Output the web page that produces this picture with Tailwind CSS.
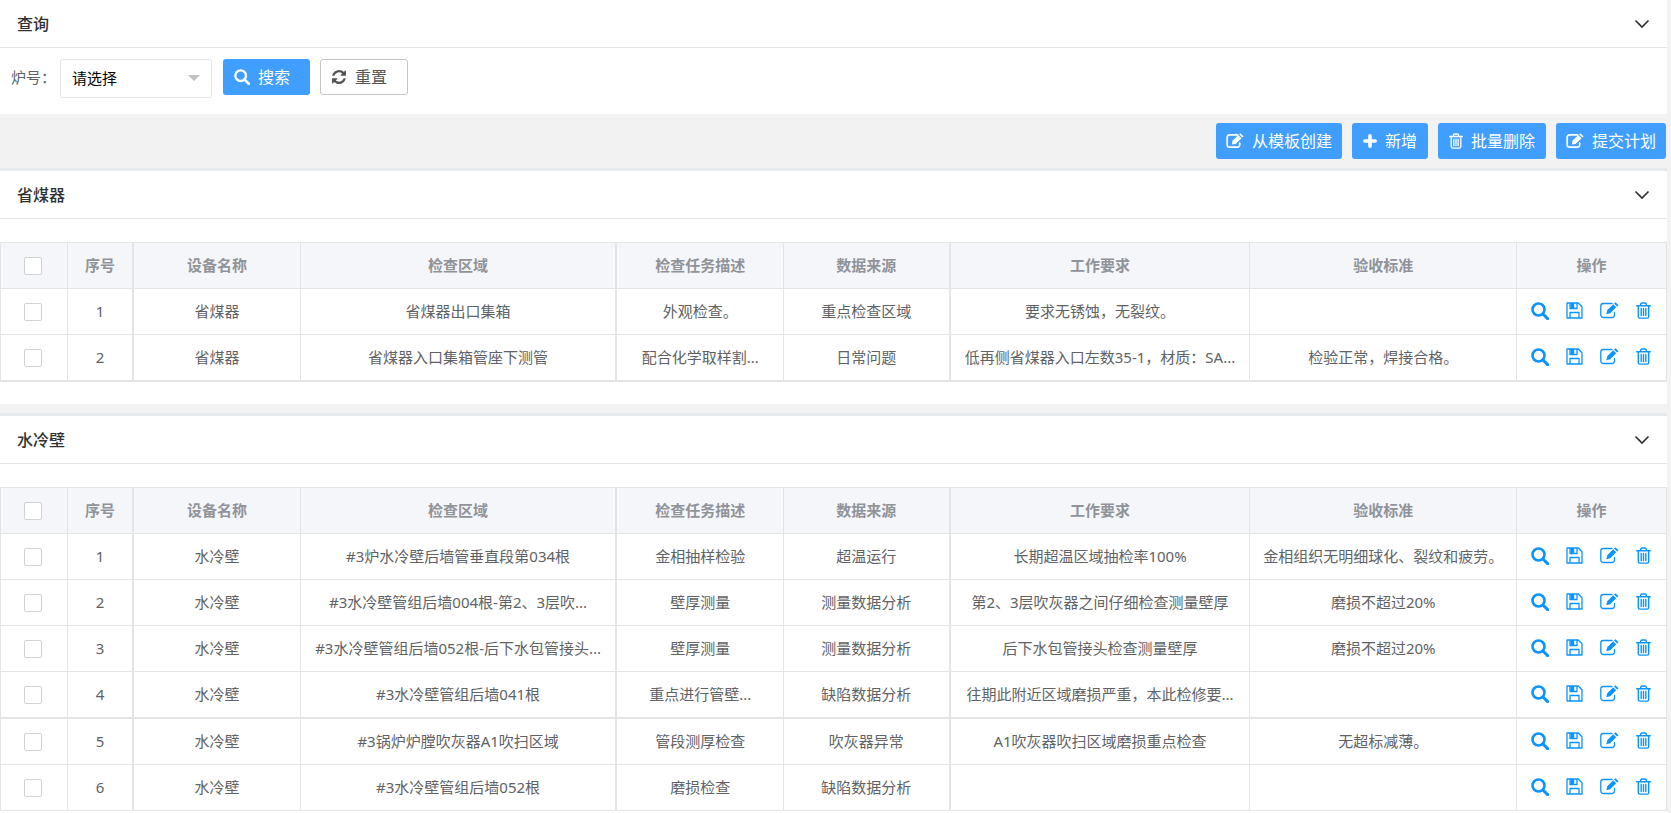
<!DOCTYPE html>
<html lang="zh-CN">
<head>
  <meta charset="UTF-8">
  <meta name="viewport" content="width=device-width, initial-scale=1.0">
  <title>检修计划</title>
  <script src="https://cdn.jsdelivr.net/npm/@tailwindcss/browser@4"></script>
</head>
<body class="bg-[#f2f2f2] min-h-screen flex flex-col pr-1 text-[15px] leading-5 text-[#606266] font-['Noto_Sans','Noto_Sans_CJK_SC',sans-serif]">

  <!-- Icons -->
  <svg class="hidden">
    <symbol id="i-search" viewBox="0 0 18 18">
      <circle cx="7.5" cy="7.5" r="6" fill="none" stroke="currentColor" stroke-width="2.6"/>
      <path d="M12 12l4.6 4.6" stroke="currentColor" stroke-width="3" stroke-linecap="round"/>
    </symbol>
    <symbol id="i-refresh" viewBox="0 0 1536 1536">
      <path fill="currentColor" d="M1511 928q0 5-1 7-64 268-268 434.500t-478 166.500q-146 0-282.500-55t-243.500-157l-129 129q-19 19-45 19t-45-19-19-45v-448q0-26 19-45t45-19h448q26 0 45 19t19 45-19 45l-137 137q71 66 161 102t187 36q134 0 250-65t186-179q11-17 53-117 8-23 30-23h192q13 0 22.500 9.500t9.500 22.500zm25-800v448q0 26-19 45t-45 19h-448q-26 0-45-19t-19-45 19-45l138-138q-148-137-349-137-134 0-250 65t-186 179q-11 17-53 117-8 23-30 23h-199q-13 0-22.500-9.500t-9.500-22.500v-7q65-268 270-434.500t480-166.500q146 0 284 55.500t245 156.500l130-129q19-19 45-19t45 19 19 45z"/>
    </symbol>
    <symbol id="i-edit" viewBox="0 0 19 17">
      <path d="M12 1.500H3.300A2.500 2.500 0 0 0 .8 4v9a2.500 2.500 0 0 0 2.500 2.500h8.700a2.500 2.500 0 0 0 2.500-2.500v-2.500" fill="none" stroke="currentColor" stroke-width="1.300" stroke-linecap="round"/>
      <path d="M6.300 12.300l.9-4 6-6 3 3-6 6zM14 1.500L15.500.2l3 3-1.400 1.400z" fill="currentColor"/>
    </symbol>
    <symbol id="i-edit-bold" viewBox="0 0 19 17">
      <path d="M12 1.900H3.700A2.500 2.500 0 0 0 1.200 4.400v8.200a2.500 2.500 0 0 0 2.500 2.500h8.300a2.500 2.500 0 0 0 2.500-2.500v-2" fill="none" stroke="currentColor" stroke-width="1.800" stroke-linecap="round"/>
      <path d="M6.300 12.300l.5-4 6.200-6.200 3.400 3.400-6.200 6.200zM13.900 1.300L15.200.2l3.400 3.400-1.300 1.200z" fill="currentColor"/>
    </symbol>
    <symbol id="i-plus" viewBox="0 0 14 14">
      <path d="M7 1.800v10.400M1.800 7h10.400" stroke="currentColor" stroke-width="3.600" stroke-linecap="round"/>
    </symbol>
    <symbol id="i-trash" viewBox="0 0 15 17">
      <path d="M.7 3.700h13.600M4.700 3.500V2.300a1.300 1.300 0 0 1 1.300-1.300h3a1.300 1.300 0 0 1 1.300 1.300v1.200M2.300 4v10.500a1.600 1.600 0 0 0 1.600 1.600h7.200a1.600 1.600 0 0 0 1.600-1.600V4M5.200 6.500v7M7.500 6.500v7M9.800 6.500v7" fill="none" stroke="currentColor" stroke-width="1.400" stroke-linecap="round"/>
    </symbol>
    <symbol id="i-save" viewBox="0 0 17 17">
      <path d="M1 1h11.300L16 4.700V16H1zM4 16v-5.500h9V16M4 1v5.500h7V1" fill="none" stroke="currentColor" stroke-width="1.300" stroke-linejoin="round"/>
      <path d="M4.500 1h3.700v5.500H4.500z" fill="currentColor"/>
    </symbol>
    <symbol id="i-down" viewBox="0 0 16 10">
      <path d="M1.500 1.500L8 8l6.500-6.500" fill="none" stroke="currentColor" stroke-width="1.700"/>
    </symbol>
  </svg>

  <!-- Query -->
  <section class="bg-white">
    <header class="flex items-center justify-between h-12 px-[17px] border-b border-[#e4e4e4] text-[#303133]">
      <h2 class="text-base leading-6 font-medium">查询</h2>
      <button type="button" aria-label="折叠"><svg class="w-4 h-[10px]"><use href="#i-down"/></svg></button>
    </header>
    <form class="flex items-start h-[66px] pt-[11px] pl-[11px]">
      <label for="furnace" class="w-[49px] leading-9 whitespace-nowrap">炉号：</label>
      <div class="relative w-[152px] mr-[11px]">
        <select id="furnace" class="appearance-none w-full h-[39px] pl-[11px] pb-[2px] border border-[#e4e4e4] rounded-[3px] bg-white text-black">
          <option>请选择</option>
        </select>
        <span class="absolute right-3 top-4 border-x-[6px] border-t-[6px] border-x-transparent border-t-[#c0c0c0] pointer-events-none"></span>
      </div>
      <button type="button" class="flex items-center h-9 w-[87px] pl-[11px] gap-2 mr-[10px] rounded-[3px] bg-[#409eff] text-white text-base">
        <svg class="w-4 h-4"><use href="#i-search"/></svg>搜索
      </button>
      <button type="button" class="flex items-center h-9 w-[88px] pl-[11px] gap-[9px] rounded-[3px] border border-[#c4c4c4] bg-white text-[#555] text-base">
        <svg class="w-[14px] h-[14px]"><use href="#i-refresh"/></svg>重置
      </button>
    </form>
  </section>

  <!-- Toolbar -->
  <div class="flex justify-end gap-[10px] py-[9px] pr-px text-base text-white">
    <button type="button" class="flex items-center h-9 px-[10px] gap-2 rounded-[3px] bg-[#409eff]">
      <svg class="w-[18px] h-4"><use href="#i-edit-bold"/></svg>从模板创建
    </button>
    <button type="button" class="flex items-center h-9 px-[11px] gap-2 rounded-[3px] bg-[#409eff]">
      <svg class="w-[14px] h-[14px]"><use href="#i-plus"/></svg>新增
    </button>
    <button type="button" class="flex items-center h-9 px-[11px] gap-2 rounded-[3px] bg-[#409eff]">
      <svg class="w-[14px] h-4"><use href="#i-trash"/></svg>批量删除
    </button>
    <button type="button" class="flex items-center h-9 px-[10px] gap-2 rounded-[3px] bg-[#409eff]">
      <svg class="w-[18px] h-4"><use href="#i-edit-bold"/></svg>提交计划
    </button>
  </div>

  <!-- 省煤器 -->
  <section class="bg-white border-t-[3px] border-[#e6eaee] pb-[22px] mb-[9px]">
    <header class="flex items-center justify-between h-12 px-[17px] border-b border-[#e4e4e4] text-[#303133]">
      <h2 class="text-base leading-6 font-medium">省煤器</h2>
      <button type="button" aria-label="折叠"><svg class="w-4 h-[10px]"><use href="#i-down"/></svg></button>
    </header>
    <div id="economizer" class="pt-[23px]"></div>
  </section>

  <!-- 水冷壁 -->
  <section class="bg-white border-t-[3px] border-[#e6eaee] flex-1">
    <header class="flex items-center justify-between h-12 px-[17px] border-b border-[#e4e4e4] text-[#303133]">
      <h2 class="text-base leading-6 font-medium">水冷壁</h2>
      <button type="button" aria-label="折叠"><svg class="w-4 h-[10px]"><use href="#i-down"/></svg></button>
    </header>
    <div id="waterwall" class="pt-[23px]"></div>
  </section>

  <script>
    const heads = ["序号", "设备名称", "检查区域", "检查任务描述", "数据来源", "工作要求", "验收标准", "操作"];

    const economizer = [
      ["省煤器", "省煤器出口集箱", "外观检查。", "重点检查区域", "要求无锈蚀，无裂纹。", ""],
      ["省煤器", "省煤器入口集箱管座下测管", "配合化学取样割...", "日常问题", "低再侧省煤器入口左数35-1，材质：SA...", "检验正常，焊接合格。"]
    ];

    const waterwall = [
      ["水冷壁", "#3炉水冷壁后墙管垂直段第034根", "金相抽样检验", "超温运行", "长期超温区域抽检率100%", "金相组织无明细球化、裂纹和疲劳。"],
      ["水冷壁", "#3水冷壁管组后墙004根-第2、3层吹...", "壁厚测量", "测量数据分析", "第2、3层吹灰器之间仔细检查测量壁厚", "磨损不超过20%"],
      ["水冷壁", "#3水冷壁管组后墙052根-后下水包管接头...", "壁厚测量", "测量数据分析", "后下水包管接头检查测量壁厚", "磨损不超过20%"],
      ["水冷壁", "#3水冷壁管组后墙041根", "重点进行管壁...", "缺陷数据分析", "往期此附近区域磨损严重，本此检修要...", ""],
      ["水冷壁", "#3锅炉炉膛吹灰器A1吹扫区域", "管段测厚检查", "吹灰器异常", "A1吹灰器吹扫区域磨损重点检查", "无超标减薄。"],
      ["水冷壁", "#3水冷壁管组后墙052根", "磨损检查", "缺陷数据分析", "", ""]
    ];

    // thick right border after 序号, 检查区域 and 数据来源
    const thick = [0, 2, 4];
    const side = i => thick.includes(i) ? "border-r-2" : "border-r";
    const check = label => `<input type="checkbox" aria-label="${label}" class="appearance-none block mx-auto w-[18px] h-[18px] border border-[#d0d2d6] rounded-[2px] bg-white checked:bg-[#409eff]">`;

    const actions = `
      <div class="flex items-center justify-between pl-[14px] pr-[15px] pb-[2px] text-[#0a94ff]">
        <button type="button" aria-label="查看"><svg class="block w-[18px] h-[18px]"><use href="#i-search"/></svg></button>
        <button type="button" aria-label="保存"><svg class="block w-[17px] h-[17px]"><use href="#i-save"/></svg></button>
        <button type="button" aria-label="编辑"><svg class="block w-[19px] h-[17px]"><use href="#i-edit"/></svg></button>
        <button type="button" aria-label="删除"><svg class="block w-[15px] h-[17px]"><use href="#i-trash"/></svg></button>
      </div>`;

    function renderTable(id, rows, thickRow) {
      const head = heads.map((h, i) => `<th class="${side(i)} border-b border-[#e4e4e4] pb-[2px] font-bold">${h}</th>`).join("");
      const body = rows.map((row, n) => {
        const bottom = n === thickRow ? "h-[47px] border-b-2" : "h-[46px] border-b";
        const cells = [n + 1, ...row].map((c, i) =>
          `<td class="${side(i)} ${bottom} border-[#e4e4e4] pb-[2px] whitespace-nowrap overflow-hidden">${c}</td>`).join("");
        return `<tr>
          <td class="border-r ${bottom} border-[#e4e4e4] pr-[2px]">${check("选择第" + (n + 1) + "行")}</td>
          ${cells}
          <td class="border-r ${bottom} border-[#e4e4e4]">${actions}</td>
        </tr>`;
      }).join("");

      document.getElementById(id).innerHTML = `
        <table class="table-fixed w-full border-separate border-spacing-0 border-t border-l border-[#e4e4e4] text-center">
          <colgroup>
            <col class="w-[4%]"><col class="w-[4%]"><col class="w-[10%]"><col class="w-[19%]"><col class="w-[10%]">
            <col class="w-[10%]"><col class="w-[18%]"><col class="w-[16%]"><col class="w-[9%]">
          </colgroup>
          <thead class="bg-[#f4f6fa] text-[#909399]">
            <tr class="h-[46px]"><th class="border-r border-b border-[#e4e4e4] pr-[2px]">${check("全选")}</th>${head}</tr>
          </thead>
          <tbody>${body}</tbody>
        </table>`;
    }

    renderTable("economizer", economizer, 1);
    renderTable("waterwall", waterwall, 3);
  </script>
</body>
</html>
